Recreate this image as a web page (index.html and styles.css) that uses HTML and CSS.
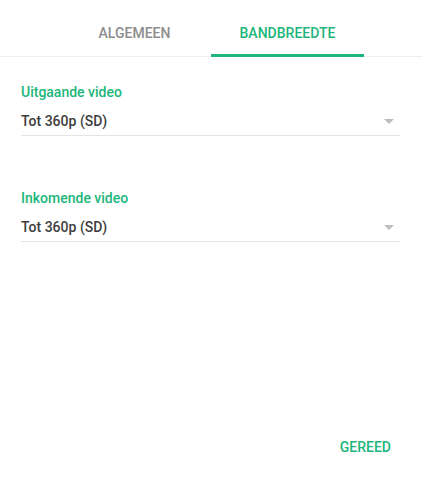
FILE: index.html
```html
<!DOCTYPE html>
<html>
  <head>
    <meta charset="UTF-8" />
    <meta name="viewport" content="width=device-width, initial-scale=1.0" />
    <title>Instellingen</title>
    <link rel="stylesheet" href="styles.css">
  </head>
  <body>
    <div class="dialog">
      <div class="tabs">
        <div class="tab">ALGEMEEN</div>
        <div class="tab active">BANDBREEDTE</div>
      </div>
      <div class="fields">
        <div class="field">
          <div class="label">Uitgaande video</div>
          <div class="select">
            <span>Tot 360p (SD)</span>
            <span class="arrow"></span>
          </div>
        </div>
        <div class="field">
          <div class="label">Inkomende video</div>
          <div class="select">
            <span>Tot 360p (SD)</span>
            <span class="arrow"></span>
          </div>
        </div>
      </div>
      <div class="actions">
        <button type="button" class="done">GEREED</button>
      </div>
    </div>
  </body>
</html>
```

FILE: styles.css
```css
body {
  margin: 0;
  font-family: Roboto, "Liberation Sans", sans-serif;
  font-size: 14px;
  line-height: 16px;
  background: #fff;
}
.dialog {
  display: flex;
  flex-direction: column;
  min-height: 480px;
}
.tabs {
  display: flex;
  justify-content: center;
  border-bottom: 1px solid #eeeeee;
}
.tab {
  position: relative;
  width: 153px;
  height: 56px;
  box-sizing: border-box;
  padding-top: 25px;
  text-align: center;
  font-weight: 500;
  color: #8d8d8d;
}
.tab.active {
  color: #1cb67b;
}
.tab.active:after {
  content: '';
  position: absolute;
  left: 0;
  right: 0;
  bottom: -1px;
  height: 3px;
  background: #1cb67b;
}
.fields {
  padding: 27px 22px 0 21px;
}
.field + .field {
  margin-top: 54px;
}
.label {
  color: #1cb67b;
  font-weight: 500;
}
.select {
  display: flex;
  justify-content: space-between;
  align-items: center;
  margin-top: 13px;
  padding-bottom: 6px;
  border-bottom: 1px solid #e4e4e4;
  color: #3d3d3d;
  font-weight: 500;
}
.arrow {
  width: 0;
  height: 0;
  margin-right: 6px;
  border-left: 5px solid transparent;
  border-right: 5px solid transparent;
  border-top: 5px solid #bdbdbd;
}
.actions {
  margin-top: auto;
  display: flex;
  justify-content: flex-end;
  padding: 0 31px 25px 0;
}
.done {
  border: 0;
  padding: 0;
  background: none;
  font: inherit;
  font-weight: 500;
  color: #1cb67b;
}
```
